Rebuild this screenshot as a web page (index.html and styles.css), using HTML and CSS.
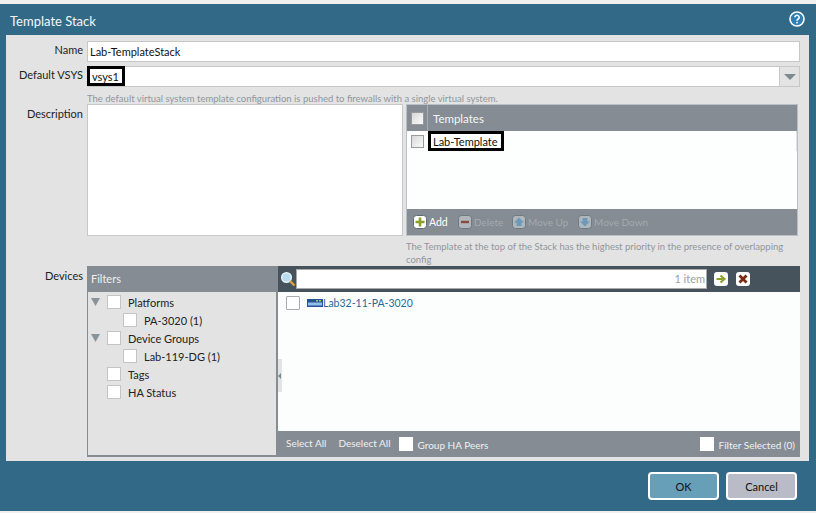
FILE: index.html
```html
<!DOCTYPE html>
<html lang="en">
<head>
<meta charset="utf-8">
<title>Template Stack</title>
<link rel="stylesheet" href="styles.css">
</head>
<body>
<div class="dialog">
  <header class="titlebar">
    <span class="title">Template Stack</span>
    <svg class="help" width="16" height="16" viewBox="0 0 16 16"><circle cx="8" cy="8" r="7" fill="#2f7fb5" stroke="#fff" stroke-width="1.6"/><path d="M5.8 6.3a2.2 2 0 1 1 3.4 1.7c-.8.5-1.2.9-1.2 1.7" fill="none" stroke="#fff" stroke-width="1.5"/><rect x="7.2" y="10.8" width="1.6" height="1.6" fill="#fff"/></svg>
  </header>
  <main class="panel">
    <div class="row row-name">
      <label class="label">Name</label>
      <div class="input">Lab-TemplateStack</div>
    </div>
    <div class="row row-vsys">
      <label class="label">Default VSYS</label>
      <div class="input select">
        <span class="mark mark-vsys">vsys1</span>
        <span class="select-btn"><svg width="12" height="6" viewBox="0 0 12 6"><path d="M0 0h12L6 6z" fill="#7c8a94"/></svg></span>
      </div>
    </div>
    <div class="row hint-row">
      <span></span>
      <p class="hint">The default virtual system template configuration is pushed to firewalls with a single virtual system.</p>
    </div>
    <div class="row row-desc">
      <label class="label label-desc">Description</label>
      <div class="desc-grid">
        <div class="textarea"></div>
        <div class="templates">
          <div class="tpl-head">
            <span class="tpl-check"><span class="chk chk-gray"></span></span>
            <span class="tpl-title">Templates</span>
          </div>
          <div class="tpl-body">
            <div class="tpl-row">
              <span class="tpl-check-cell"><span class="chk chk-gray"></span></span>
              <span class="mark mark-tpl">Lab-Template</span>
            </div>
          </div>
          <div class="tpl-foot">
            <span class="tool tool-add"><svg class="ico" width="14" height="14" viewBox="0 0 14 14"><rect x=".5" y=".5" width="13" height="13" rx="3" fill="#fff" stroke="#5d6b75"/><path d="M7 2.500v9M2.500 7h9" stroke="#8aa02a" stroke-width="2.600"/></svg><span class="tool-on">Add</span></span>
            <span class="tool tool-del"><svg class="ico" width="14" height="14" viewBox="0 0 14 14"><rect x=".5" y=".5" width="13" height="13" rx="3" fill="#b0b7bc" stroke="#6d7a83"/><path d="M3 7h8" stroke="#8a4a3c" stroke-width="2.400"/></svg><span class="tool-off">Delete</span></span>
            <span class="tool tool-up"><svg class="ico" width="14" height="14" viewBox="0 0 14 14"><rect x=".5" y=".5" width="13" height="13" rx="3" fill="#b0b7bc" stroke="#6d7a83"/><path d="M7 2.500 12 7.500H9.500V11h-5V7.500H2z" fill="#6c9ab8"/></svg><span class="tool-off">Move Up</span></span>
            <span class="tool tool-down"><svg class="ico" width="14" height="14" viewBox="0 0 14 14"><rect x=".5" y=".5" width="13" height="13" rx="3" fill="#b0b7bc" stroke="#6d7a83"/><path d="M7 11.500 12 6.500H9.500V3h-5v3.500H2z" fill="#6c9ab8"/></svg><span class="tool-off">Move Down</span></span>
          </div>
        </div>
      </div>
    </div>
    <div class="row hint-row2">
      <span></span>
      <p class="hint hint-tpl">The Template at the top of the Stack has the highest priority in the presence of overlapping config</p>
    </div>
    <div class="row row-devices">
      <label class="label label-devices">Devices</label>
      <div class="devices">
        <aside class="filters">
          <div class="filters-head">Filters</div>
          <ul class="tree">
            <li class="node"><span class="tri"></span><span class="box"></span><span>Platforms</span></li>
            <li class="node sub"><span class="box"></span><span>PA-3020 (1)</span></li>
            <li class="node"><span class="tri"></span><span class="box"></span><span>Device Groups</span></li>
            <li class="node sub"><span class="box"></span><span>Lab-119-DG (1)</span></li>
            <li class="node"><span class="tri tri-none"></span><span class="box"></span><span>Tags</span></li>
            <li class="node"><span class="tri tri-none"></span><span class="box"></span><span>HA Status</span></li>
          </ul>
        </aside>
        <section class="results">
          <span class="collapse"></span>
          <div class="search">
            <svg class="lens" width="16" height="17" viewBox="0 0 16 17"><circle cx="6.500" cy="6.500" r="4.800" fill="#b9dcf3" stroke="#e6f1f8" stroke-width="1.500"/><path d="M10 10l4.500 4.500" stroke="#d7a33c" stroke-width="2.400"/></svg>
            <div class="search-input">1 item</div>
            <svg class="go" width="14" height="14" viewBox="0 0 14 14"><rect width="14" height="14" rx="3" fill="#fff"/><path d="M2.500 7h6M6.500 3.500 10.500 7l-4 3.500" fill="none" stroke="#8aa02a" stroke-width="2"/></svg>
            <svg class="clear" width="14" height="14" viewBox="0 0 14 14"><rect width="14" height="14" rx="3" fill="#fff"/><path d="M3.500 3.500l7 7M10.500 3.500l-7 7" stroke="#7a2a10" stroke-width="2.800"/></svg>
          </div>
          <div class="list">
            <div class="device">
              <span class="box box-list"></span>
              <svg class="dev-ico" width="16" height="8" viewBox="0 0 16 8"><rect width="16" height="8" fill="#27509c"/><rect x="1" y="3.500" width="14" height="3" fill="#8fc0e8"/><rect x="9" y="1" width="2" height="1.500" fill="#9fd04a"/><rect x="12" y="1" width="2" height="1.500" fill="#9fd04a"/></svg>
              <span class="dev-name">Lab32-11-PA-3020</span>
            </div>
          </div>
          <div class="foot">
            <span class="foot-link">Select All</span>
            <span class="foot-link">Deselect All</span>
            <span class="foot-box"></span>
            <span class="foot-text">Group HA Peers</span>
            <span class="foot-box foot-right"></span>
            <span class="foot-text">Filter Selected (0)</span>
          </div>
        </section>
      </div>
    </div>
  </main>
  <footer class="actions">
    <button class="btn btn-ok">OK</button>
    <button class="btn btn-cancel">Cancel</button>
  </footer>
</div>
</body>
</html>
```

FILE: styles.css
```css
* { box-sizing: border-box; }
html, body { margin: 0; padding: 0; }
body {
  width: 816px;
  height: 513px;
  background: #f0f0f0;
  padding-top: 4px;
  font-family: Lato, "Liberation Sans", sans-serif;
  font-size: 11px;
  color: #222;
  overflow: hidden;
}
.dialog {
  width: 816px;
  height: 507px;
  background: #326987;
  display: flex;
  flex-direction: column;
}
.titlebar {
  height: 31px;
  flex: none;
  display: flex;
  align-items: center;
  justify-content: space-between;
  padding: 0 10px 0 10px;
}
.title { color: #f2f6f8; font-size: 13px; padding-top: 2px; }
.help { margin-top: -1px; margin-right: 1px; }
.panel {
  height: 426px;
  flex: none;
  margin: 0 7px 0 6px;
  background: #e3e3e3;
  padding-top: 6px;
}
.row {
  display: grid;
  grid-template-columns: 81px 1fr;
  column-gap: 0;
}
.label {
  text-align: right;
  padding-right: 4px;
  color: #222;
  line-height: 17px;
}
.label-devices { padding-top: 1px; }
.row-name { height: 25px; }
.row-vsys { height: 22px; }
.input {
  width: 713px;
  height: 21px;
  background: #fff;
  border: 1px solid #c8c8c8;
  padding: 0 2px;
  line-height: 19px;
  color: #111;
}
.select {
  display: flex;
  align-items: stretch;
  justify-content: space-between;
  padding: 0;
}
.select-btn {
  width: 20px;
  background: #e3e3e3;
  border-left: 1px solid #c8c8c8;
  display: flex;
  align-items: center;
  justify-content: center;
}
.mark {
  border: 3px solid #000;
  background: #fff;
  display: inline-flex;
  align-items: center;
  color: #111;
}
.mark-vsys { height: 20px; width: 38px; margin: -1px 0 -1px -1px; padding-left: 2px; position: relative; }
.hint-row { height: 16px; }
.hint {
  margin: 0;
  color: #8f979d;
  font-size: 9.500px;
  line-height: 13px;
}
.hint-row .hint { padding-top: 4px; white-space: nowrap; }
.row-desc { height: 132px; }
.label-desc { padding-top: 1px; }
.desc-grid { display: flex; gap: 3px; }
.textarea {
  width: 316px;
  height: 132px;
  background: #fff;
  border: 1px solid #c8c8c8;
}
.templates {
  width: 392px;
  height: 132px;
  border: 1px solid #b9c0c5;
  display: flex;
  flex-direction: column;
  background: #fff;
}
.tpl-head {
  height: 26px;
  flex: none;
  background: #858c93;
  display: flex;
  align-items: center;
  color: #f5f5f5;
  font-size: 11.500px;
}
.tpl-check {
  width: 21px;
  height: 26px;
  border-right: 1px solid #a7adb2;
  display: flex;
  align-items: center;
  justify-content: center;
}
.tpl-title { padding-left: 5px; }
.chk {
  width: 13px;
  height: 13px;
  display: block;
  background: linear-gradient(135deg, #d8d8d8, #fbfbfb);
  border: 1px solid #9a9a9a;
}
.tpl-body { flex: 1; background: #fdfefe; }
.tpl-row {
  display: flex;
  align-items: center;
  height: 20px;
  border-right: 1px solid #e2e2e2;
}
.tpl-check-cell { width: 21px; display: flex; justify-content: center; }
.mark-tpl { height: 20px; width: 76px; padding: 0 0 0 2px; }
.tpl-foot {
  height: 26px;
  flex: none;
  background: #858c93;
  display: flex;
  align-items: center;
  padding-left: 6px;
  font-size: 10px;
}
.tool { display: inline-flex; align-items: center; gap: 2px; }
.tool-add { width: 45px; }
.tool-del { width: 54px; }
.tool-up { width: 66px; }
.tool-on { color: #fff; font-size: 10.500px; }
.tool-off { color: #a4aaaf; }
.hint-row2 { height: 30px; }
.hint-tpl { padding: 4px 0 0 319px; width: 710px; }
.row-devices { height: 191px; }
.devices {
  width: 713px;
  height: 191px;
  display: flex;
}
.filters {
  width: 191px;
  border: solid #858c93;
  border-width: 0 2px 2px 1px;
  background: #e3e3e3;
}
.filters-head {
  height: 26px;
  margin: 0 -2px 0 -1px;
  background: #858c93;
  color: #f0f0f0;
  padding-left: 4px;
  line-height: 26px;
}
.tree { list-style: none; margin: 0; padding: 1px 0 0 3px; }
.node { height: 18px; display: flex; align-items: center; gap: 7px; color: #222; }
.node.sub { padding-left: 32px; }
.tri {
  width: 9px;
  height: 8px;
  clip-path: polygon(0 0, 100% 0, 50% 100%);
  background: #8a949b;
}
.tri-none { background: transparent; }
.box {
  width: 14px;
  height: 14px;
  background: #fff;
  border: 1px solid #c4c4c4;
  flex: none;
}
.results {
  width: 522px;
  position: relative;
  display: flex;
  flex-direction: column;
  background: #fcfefe;
}
.collapse {
  position: absolute;
  left: 0;
  top: 93px;
  width: 4px;
  height: 33px;
  background: #e3e3e3;
}
.collapse::after {
  content: "";
  position: absolute;
  left: 0;
  top: 14px;
  border: 3px solid transparent;
  border-right-color: #7c8a94;
  border-left-width: 0;
}
.search {
  height: 26px;
  flex: none;
  background: #46535c;
  display: flex;
  align-items: center;
  padding-left: 2px;
}
.search-input {
  width: 411px;
  height: 20px;
  background: #fff;
  border: 1px solid #aaa;
  color: #99a0a5;
  text-align: right;
  padding-right: 1px;
  line-height: 18px;
}
.go { margin-left: 7px; }
.clear { margin-left: 8px; }
.list { flex: 1; }
.device { display: flex; align-items: center; height: 21px; padding: 0 0 0 8px; font-size: 10.500px; }
.box-list { border-color: #a5abaf; width: 14px; height: 14px; border-radius: 1px; }
.dev-ico { margin-left: 7px; }
.dev-name { color: #1f6b96; }
.foot {
  height: 26px;
  flex: none;
  background: #858c93;
  display: flex;
  align-items: center;
  color: #eef1f3;
  padding-left: 8px;
  font-size: 10px;
}
.foot-link { margin-right: 12px; padding-bottom: 3px; }
.foot-box { width: 14px; height: 14px; background: #fff; margin: 0 5px 0 -4px; }
.foot-right { margin-left: auto; }
.foot-text { margin-right: 5px; padding-top: 1px; }
.actions {
  flex: 1;
  display: flex;
  justify-content: flex-end;
  align-items: center;
  padding: 0 19px 0 0;
  gap: 7px;
}
.btn {
  width: 71px;
  height: 28px;
  border: 2px solid #fff;
  border-radius: 4px;
  font: 11px Lato, "Liberation Sans", sans-serif;
  color: #111;
  padding: 0;
}
.btn-ok { background: #679fb9; }
.btn-cancel { background: #b9bcc6; }
```
